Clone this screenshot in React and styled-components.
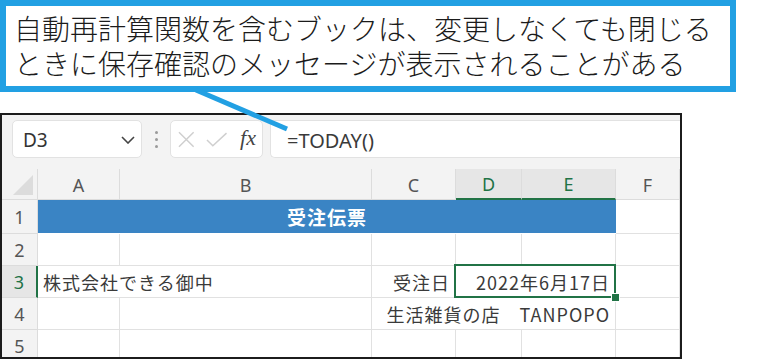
import React from 'react';
import styled, { createGlobalStyle, css } from 'styled-components';

const BLUE = '#22a0e3';
const GREEN = '#217346';
const GRID = '#e1e1e1';

const GlobalStyle = createGlobalStyle`
  html, body {
    margin: 0;
    padding: 0;
    background: #fff;
  }
  body {
    font-family: "Noto Sans", "Noto Sans CJK JP", sans-serif;
  }
`;

const columns = ['A', 'B', 'C', 'D', 'E', 'F'];
const activeColumns = ['D', 'E'];

export default function App() {
  return (
    <Page>
      <GlobalStyle />
      <Callout>
        <CalloutLine>自動再計算関数を含むブックは、変更しなくても閉じる</CalloutLine>
        <CalloutLine>ときに保存確認のメッセージが表示されることがある</CalloutLine>
      </Callout>
      <Tail width="783" height="359" viewBox="0 0 783 359">
        <line x1="196" y1="90" x2="287" y2="129" stroke={BLUE} strokeWidth="5" />
      </Tail>

      <Sheet>
        <FormulaBar>
          <NameBox>
            <CellRef>D3</CellRef>
            <svg width="14" height="8" viewBox="0 0 14 8">
              <path d="M1 1l6 6 6-6" fill="none" stroke="#444" strokeWidth="1.6" />
            </svg>
          </NameBox>
          <Grip>
            <span />
            <span />
            <span />
          </Grip>
          <ActionBox>
            <svg width="17" height="17" viewBox="0 0 17 17">
              <path d="M1 1l15 15M16 1L1 16" stroke="#cfcfcf" strokeWidth="1.5" />
            </svg>
            <svg width="22" height="15" viewBox="0 0 22 15">
              <path d="M1 8l6 6L21 1" fill="none" stroke="#cfcfcf" strokeWidth="1.5" />
            </svg>
            <Fx>fx</Fx>
          </ActionBox>
          <FormulaInput>=TODAY()</FormulaInput>
        </FormulaBar>

        <Grid>
          <Corner>
            <Triangle />
          </Corner>
          {columns.map((c) => (
            <ColHeader key={c} $active={activeColumns.includes(c)}>
              {c}
            </ColHeader>
          ))}

          <RowHeader>1</RowHeader>
          <TitleCell $span={5}>受注伝票</TitleCell>
          <Cell />

          <RowHeader>2</RowHeader>
          {columns.map((c) => (
            <Cell key={c} />
          ))}

          <RowHeader $active>3</RowHeader>
          <Cell $span={2}>株式会社できる御中</Cell>
          <Cell $align="right">受注日</Cell>
          <SelectedCell $span={2} $align="right">
            2022年6月17日
          </SelectedCell>
          <Cell />

          <RowHeader>4</RowHeader>
          <Cell />
          <Cell />
          <Cell $span={3} $align="right">
            生活雑貨の店　TANPOPO
          </Cell>
          <Cell />

          <RowHeader>5</RowHeader>
          {columns.map((c) => (
            <Cell key={c} />
          ))}
        </Grid>
      </Sheet>
    </Page>
  );
}

const Page = styled.div`
  position: relative;
  width: 783px;
  height: 359px;
  overflow: hidden;
  display: flex;
  flex-direction: column;
  align-items: flex-start;
`;

const Callout = styled.div`
  box-sizing: border-box;
  flex-shrink: 0;
  width: 736px;
  height: 92px;
  border: 6px solid ${BLUE};
  padding: 5px 0 0 8px;
  font-family: "Noto Sans CJK JP", sans-serif;
  font-weight: 300;
  font-size: 28px;
  line-height: 35px;
  color: #1b1b1b;
`;

const CalloutLine = styled.div`
  white-space: nowrap;
  height: 35px;
  overflow: visible;
`;

const Tail = styled.svg`
  position: absolute;
  left: 0;
  top: 0;
  z-index: 3;
  pointer-events: none;
`;

const Sheet = styled.div`
  box-sizing: border-box;
  flex-shrink: 0;
  margin-top: 21px;
  width: 682px;
  height: 246px;
  border: 2px solid #1c1c1c;
  background: #f3f3f3;
  overflow: hidden;
  display: flex;
  flex-direction: column;
`;

const FormulaBar = styled.div`
  flex-shrink: 0;
  display: flex;
  align-items: stretch;
  height: 38px;
  padding: 5px 0 0 10px;
  margin-bottom: 11px;
`;

const boxStyle = css`
  box-sizing: border-box;
  background: #fff;
  border: 1px solid #e2e2e2;
  border-radius: 5px;
  display: flex;
  align-items: center;
`;

const NameBox = styled.div`
  ${boxStyle}
  width: 130px;
  justify-content: space-between;
  padding: 2px 6px 0 10px;
`;

const CellRef = styled.span`
  font-size: 19px;
  color: #333;
`;

const Grip = styled.div`
  width: 28px;
  display: flex;
  flex-direction: column;
  align-items: center;
  justify-content: center;
  gap: 4px;

  span {
    width: 3px;
    height: 3px;
    border-radius: 50%;
    background: #9a9a9a;
  }
`;

const ActionBox = styled.div`
  ${boxStyle}
  width: 93px;
  padding: 0 6px 0 7px;
  gap: 11px;
`;

const Fx = styled.span`
  font-family: "Liberation Serif", "DejaVu Serif", serif;
  font-style: italic;
  font-size: 22px;
  color: #444;
  margin-left: 2px;
  margin-top: -2px;
`;

const FormulaInput = styled.div`
  ${boxStyle}
  flex: 1;
  margin-left: 7px;
  border-right: none;
  border-radius: 5px 0 0 5px;
  padding: 2px 0 0 16px;
  font-size: 20px;
  color: #3a3a3a;
`;

const Grid = styled.div`
  flex-shrink: 0;
  display: grid;
  grid-template-columns: 36px 82px 252px 84px 66px 94px 64px;
  grid-template-rows: 31px 34px 32px 32px 32px 32px;
  font-family: "Noto Sans CJK JP", sans-serif;
`;

const Corner = styled.div`
  box-sizing: border-box;
  border-right: 1px solid #dcdcdc;
  border-bottom: 1px solid #dcdcdc;
  display: flex;
  align-items: flex-end;
  justify-content: flex-end;
  padding: 0 4px 4px 0;
`;

const Triangle = styled.div`
  width: 0;
  height: 0;
  border-style: solid;
  border-width: 0 0 20px 20px;
  border-color: transparent transparent #dcdcdc transparent;
`;

const ColHeader = styled.div`
  box-sizing: border-box;
  display: flex;
  align-items: center;
  justify-content: center;
  font-family: "Noto Sans", sans-serif;
  font-size: 18px;
  padding-top: 1px;
  color: ${(p) => (p.$active ? GREEN : '#555')};
  background: ${(p) => (p.$active ? '#e6e6e6' : '#f3f3f3')};
  border-right: 1px solid #dcdcdc;
  border-bottom: ${(p) => (p.$active ? `2px solid ${GREEN}` : '1px solid #dcdcdc')};
`;

const RowHeader = styled.div`
  box-sizing: border-box;
  display: flex;
  align-items: center;
  justify-content: center;
  font-family: "Noto Sans", sans-serif;
  font-size: 18px;
  color: ${(p) => (p.$active ? GREEN : '#555')};
  background: ${(p) => (p.$active ? '#e6e6e6' : '#f3f3f3')};
  border-bottom: 1px solid #dcdcdc;
  border-right: ${(p) => (p.$active ? `2px solid ${GREEN}` : '1px solid #dcdcdc')};
`;

const Cell = styled.div`
  box-sizing: border-box;
  grid-column: span ${(p) => p.$span || 1};
  display: flex;
  align-items: center;
  justify-content: ${(p) => (p.$align === 'right' ? 'flex-end' : 'flex-start')};
  padding: 0 5px;
  background: #fff;
  border-right: 1px solid ${GRID};
  border-bottom: 1px solid ${GRID};
  font-size: 18px;
  letter-spacing: 1px;
  color: #3a3a3a;
  white-space: nowrap;
`;

const TitleCell = styled(Cell)`
  justify-content: center;
  background: #3a84c4;
  border-right: none;
  border-bottom-color: #fff;
  color: #fff;
  font-weight: 700;
  font-size: 19px;
`;

const SelectedCell = styled(Cell)`
  position: relative;

  &::after {
    content: '';
    position: absolute;
    top: -2px;
    left: -2px;
    right: -1px;
    bottom: -1px;
    border: 2px solid ${GREEN};
    pointer-events: none;
  }

  &::before {
    content: '';
    position: absolute;
    right: -5px;
    bottom: -5px;
    width: 7px;
    height: 7px;
    background: ${GREEN};
    border: 1px solid #fff;
    z-index: 1;
  }
`;
